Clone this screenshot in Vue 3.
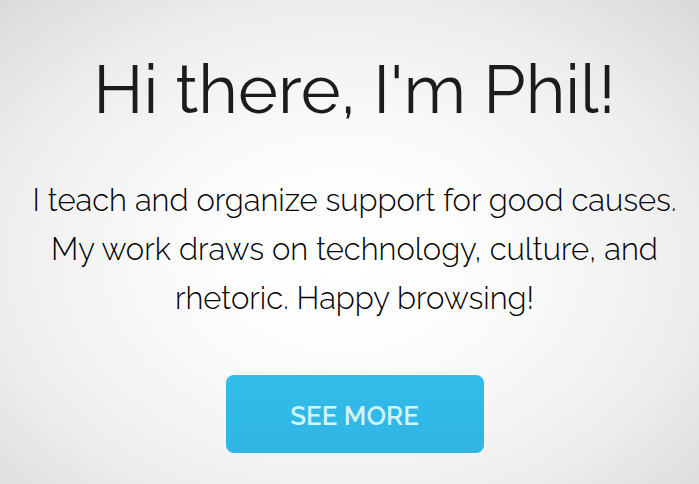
<script setup>
const heading = "Hi there, I'm Phil!"
</script>

<template>
  <main class="hero">
    <h1>{{ heading }}</h1>
    <p>I teach and organize support for good causes. My work draws on technology, culture, and rhetoric. Happy browsing!</p>
    <a class="button" href="#more">SEE MORE</a>
  </main>
</template>

<style>
body {
  margin: 0;
}
</style>

<style scoped>
.hero {
  min-height: 100vh;
  box-sizing: border-box;
  padding: 48px 14px 30px 24px;
  display: flex;
  flex-direction: column;
  align-items: center;
  text-align: center;
  font-family: Raleway, Lato, sans-serif;
  color: #1c1c1e;
  background: radial-gradient(ellipse at 49% 54%, #ffffff 0%, #fcfcfc 30%, #eeeeee 68%, #d9d9d9 100%);
}

h1 {
  margin: 0;
  font-size: 68px;
  line-height: 82px;
  font-weight: 400;
}

p {
  margin: 46px 0 0;
  font-size: 31px;
  line-height: 49px;
  font-weight: 300;
  color: #000000;
}

.button {
  margin-top: 52px;
  box-sizing: border-box;
  width: 258px;
  padding: 4px 0 0;
  border-radius: 8px;
  font-size: 26px;
  line-height: 74px;
  font-weight: 600;
  text-decoration: none;
  color: #d2f4fa;
  background: linear-gradient(#32bdeb, #30b5e3);
}
</style>
